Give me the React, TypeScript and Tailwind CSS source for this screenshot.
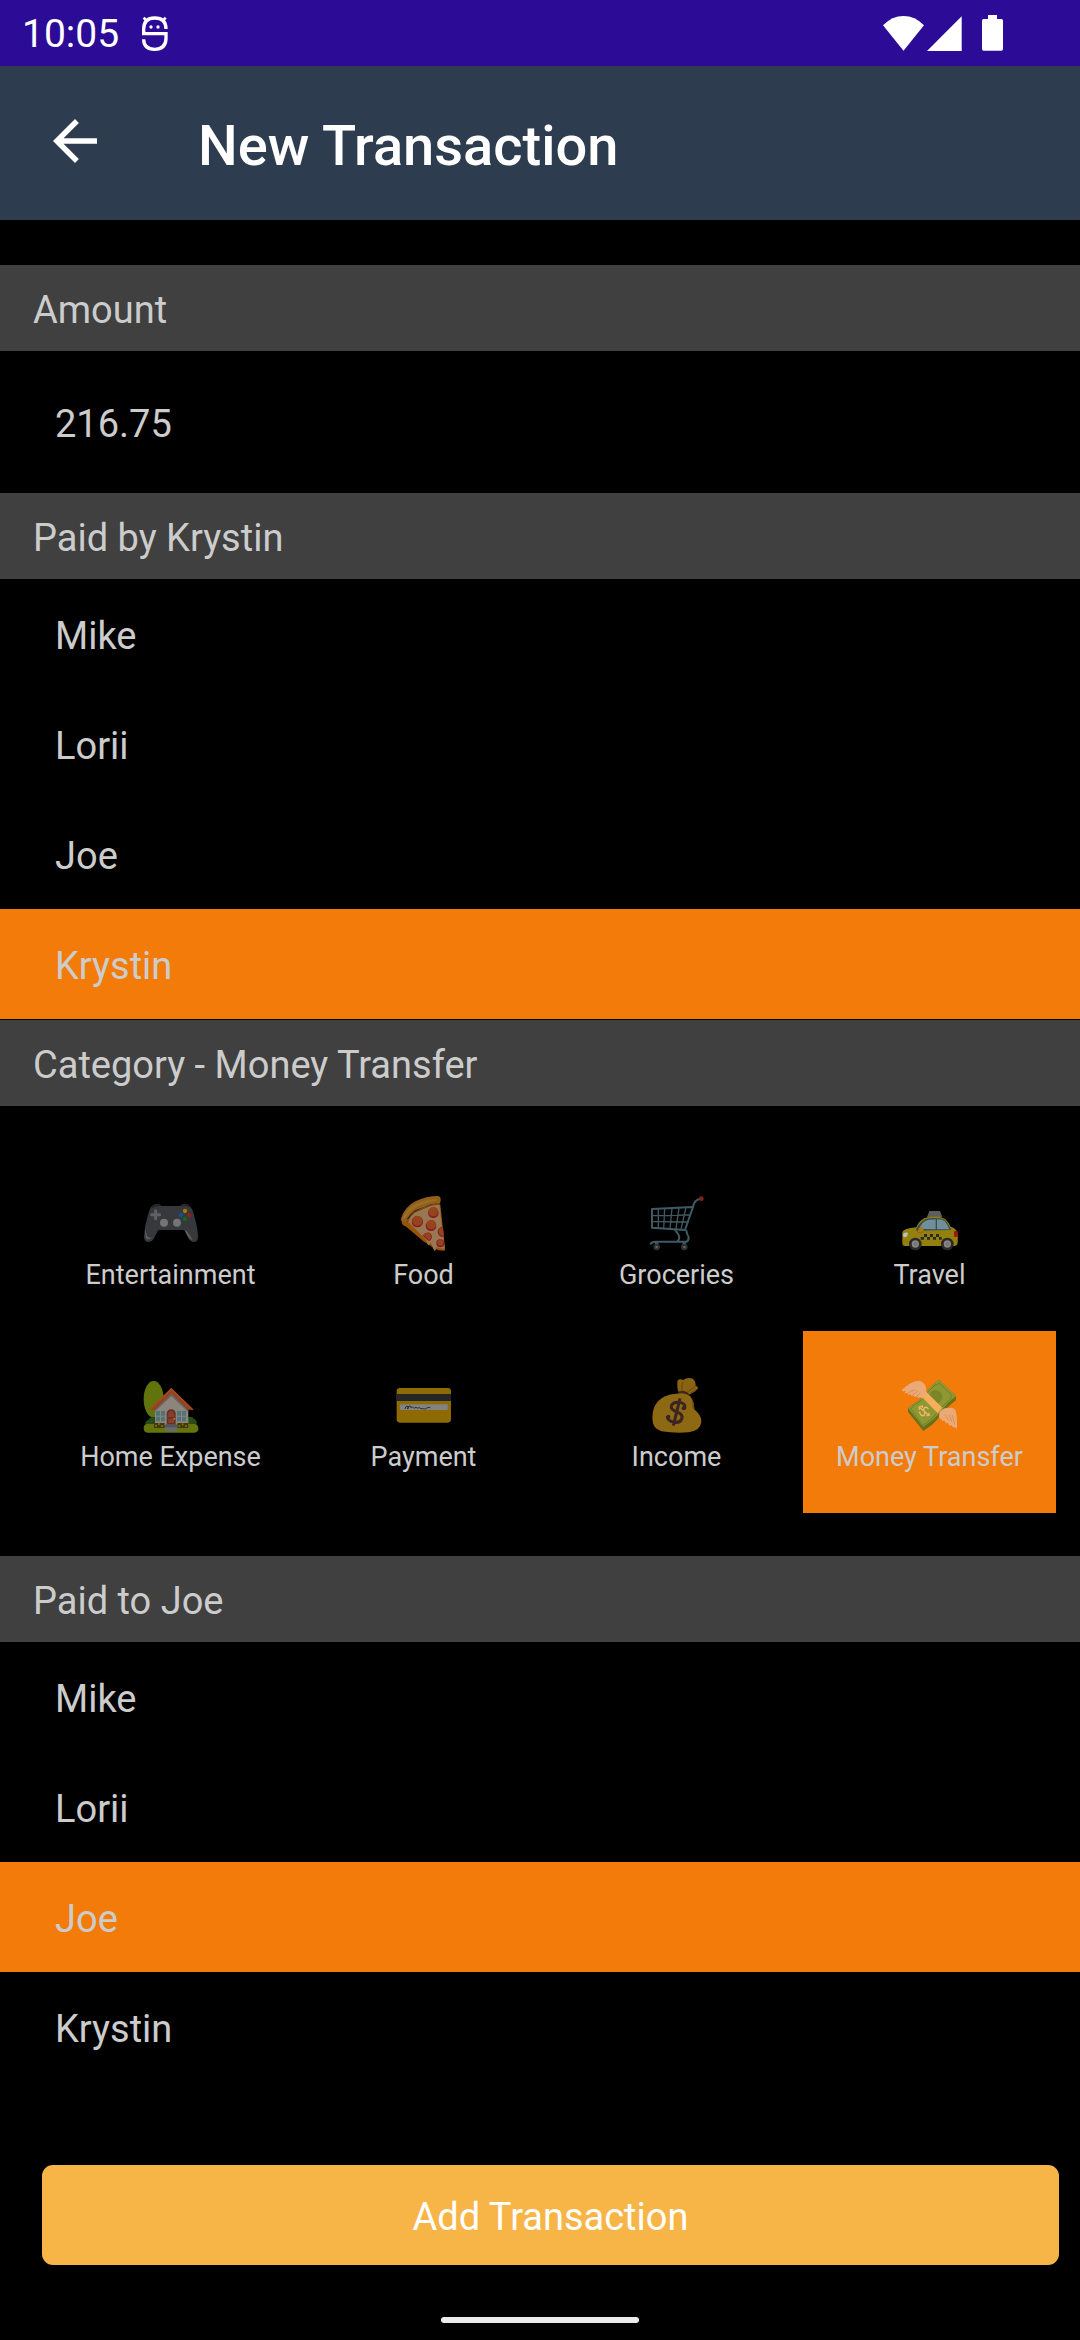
import { useState } from "react";
import type { ReactNode } from "react";

function Emoji({ viewBox, children }: { viewBox: string; children: ReactNode }) {
  return (
    <svg viewBox={viewBox} className="size-[57px] overflow-visible" aria-hidden="true">
      {children}
    </svg>
  );
}

const Gamepad = () => (
  <Emoji viewBox="246 75 171 171">
    <path d="M276 108q5-6 14-6 11 0 13 6h58q3-6 14-6 10 0 14 7 8 5 13 26 12 44 12 65 0 16-13 16-9 0-16-12l-11-22q-2-3-8-2h-66q-5 0-7 3l-12 24q-6 10-17 9-12-1-12-15 2-36 12-66 6-22 12-27z" fill="#37383c" />
    <path d="M276 109q5-6 14-6 11 0 13 5-16-1-27 6zM361 108q3-5 14-5 10 0 14 9-12-6-28-4z" fill="#222327" />
    <path d="M257 174q-3 22 2 32 8 6 18-4-12 4-16-5-4-10-4-23zM374 181q6 0 12 10l12 19q-10-2-15-12z" fill="#606164" />
    <path d="M287 122v24M275 134h24" stroke="#606164" strokeWidth="9" strokeLinecap="round" />
    <circle cx="312" cy="158" r="12" fill="#757575" />
    <circle cx="351" cy="158" r="12" fill="#757575" />
    <circle cx="375" cy="123" r="6.500" fill="#a97704" />
    <circle cx="363" cy="135" r="6.500" fill="#10509a" />
    <circle cx="387" cy="136" r="6.500" fill="#a01b18" />
    <circle cx="375" cy="147" r="6.500" fill="#0b6b29" />
  </Emoji>
);

const Pizza = () => (
  <Emoji viewBox="165 75 171 171">
    <path d="M185 155q0 10 12 14l53 45 14 8 20 14q14 7 29 6 3-1 2-9l-14-130z" fill="#9a5206" />
    <path d="M202 153q12-24 44-39 28-12 52-13 6 62 16 132-2 4-7 3l-17-4q-4 14-8 9-5-10-8-22-4-2-6 6-5 4-9-15z" fill="#987853" />
    <path d="M183 146q10-35 43-52 34-16 68-16 9 1 8 14-1 9-5 10-22-3-42 8-15 6-27 10-19 12-30 33-7 6-12 2-4-4-3-9z" fill="#8f5f1b" />
    <path d="M186 146q12-28 40-43 32-18 70-14-30 8-54 17-30 12-47 39z" fill="#9d6c24" />
    <path d="M202 156q10-24 28-33 12-4 27-11 20-11 40-9" fill="none" stroke="#7b4512" strokeWidth="4" />
    <g fill="#871d24">
      <circle cx="232" cy="155" r="17" />
      <circle cx="280" cy="128" r="16" />
      <circle cx="273" cy="167" r="16" />
      <path d="M309 170q-16 2-16 16 1 15 19 15z" />
      <path d="M248 197q8-12 20-9 10 6 7 17-3 9-9 8z" />
      <circle cx="301" cy="220" r="12" />
    </g>
    <g fill="#96441c">
      <circle cx="232" cy="152" r="15" />
      <circle cx="280" cy="125" r="14" />
      <circle cx="274" cy="164" r="14" />
      <path d="M309 172q-13 2-13 13 1 11 15 12z" />
      <path d="M251 196q8-9 17-6 7 5 5 14-3 6-7 5z" />
      <circle cx="301" cy="218" r="9" />
    </g>
  </Emoji>
);

const Cart = () => (
  <Emoji viewBox="174 75 171 171">
    <g fill="none" stroke="#3f5a64" strokeLinecap="round" strokeLinejoin="round">
      <path d="M186 117l123-6-24 69-99-7z" strokeWidth="6" />
      <path d="M187 137l114-2M187 155l107 1M205 117v57M224 116l-3 59M246 115l-6 61M267 114l-9 63M288 112l-15 66" strokeWidth="4" />
      <path d="M309 111q3-22 23-25" strokeWidth="6" />
      <path d="M182 221q4-6 15-6h92q8-2 7-14-6-9-7-19M256 181q11 12 12 22-1 8-6 11" strokeWidth="6" />
    </g>
    <path d="M195 217h10v10h-10zM278 217h10v10h-10z" fill="#42606c" />
    <circle cx="334" cy="86" r="7" fill="#7d261b" />
    <circle cx="200" cy="231" r="10" fill="#303030" />
    <circle cx="283" cy="231" r="10" fill="#303030" />
    <circle cx="200" cy="231" r="4" fill="#606060" />
    <circle cx="283" cy="231" r="4" fill="#606060" />
  </Emoji>
);

const Taxi = () => (
  <Emoji viewBox="153 75 171 171">
    <path d="M238 123h32l7 19h-46z" fill="#5e5e5e" />
    <path d="M157 186q3-10 42-14 8-20 24-27 15-6 44-5 22 2 35 30 14 4 20 16 3 24 0 37-2 4-7 5H162q-5-1-5-8z" fill="#94800f" />
    <path d="M199 177q14-29 38-32 26-3 43 3 12 6 24 32l-105 2z" fill="#3b4a4b" />
    <path d="M206 177q12-25 30-28l21-1v30zM261 148q17 0 23 6 8 8 14 24h-37z" fill="#6f8f9b" />
    <path d="M160 190q8-4 14-2-1 13-9 14-5 0-6-5z" fill="#bdbdbd" />
    <rect x="312" y="183" width="11" height="18" rx="3" fill="#a01512" />
    <path d="M204 184q1-12 9-13 7 0 8 10-2 8-11 7z" fill="#a97b0c" />
    <path d="M201 185l10 4 8-4" fill="none" stroke="#a8540a" strokeWidth="3" />
    <path d="M222 192h9v9h9v-9h9v9h9v-9h9v9h8v8h-8v-8h-9v8h-9v-8h-9v8h-9v-8h-9v8h-10v-8h10z" fill="#2b2b24" />
    <circle cx="196" cy="222" r="19" fill="#2d2826" />
    <circle cx="292" cy="222" r="19" fill="#2d2826" />
    <circle cx="196" cy="222" r="11" fill="#858585" />
    <circle cx="292" cy="222" r="11" fill="#858585" />
    <circle cx="196" cy="222" r="5" fill="#727272" />
    <circle cx="292" cy="222" r="5" fill="#727272" />
  </Emoji>
);

const House = () => (
  <Emoji viewBox="246 81 171 171">
    <path d="M276 195h9v28h-9z" fill="#3d2a26" />
    <ellipse cx="281" cy="148" rx="30" ry="55" fill="#61730b" />
    <path d="M256 224q-1-12 10-15 7-12 20-7h98q13-6 18 5 10 3 8 17z" fill="#2a4b16" />
    <path d="M251 234q0-11 12-12h141q11 2 11 13 0 13-12 13H263q-12 0-12-14z" fill="#65740c" />
    <path d="M334 126l51 51v50H285v-50z" fill="#8b857c" />
    <path d="M334 130l-50 47v8l50-47 50 47v-8z" fill="#68625c" />
    <path d="M334 114l67 65h-17l-50-49-50 49h-17z" fill="#95401f" />
    <path d="M334 114l67 65h-6l-61-58-61 58h-6z" fill="#a64b25" />
    <path d="M288 183h12v14h-12zM303 183h12v14h-12zM288 200h12v14h-12zM303 200h12v14h-12zM351 183h12v14h-12zM366 183h12v14h-12zM351 200h12v14h-12zM366 200h12v14h-12z" fill="#51747b" />
    <path d="M320 224v-34q2-12 13-12 12 0 14 12v34z" fill="#6d2e22" />
    <path d="M325 201v-10q2-8 8-8 7 0 9 8v10zM325 206h17v13h-17z" fill="#84402f" />
    <circle cx="343" cy="206" r="3" fill="#b38007" />
    <path d="M282 219h32v15h-32zM352 219h33v15h-33z" fill="#3f3b0d" />
    <g fill="#8d720b">
      <circle cx="288" cy="227" r="3" />
      <circle cx="297" cy="222" r="3" />
      <circle cx="306" cy="228" r="3" />
      <circle cx="358" cy="228" r="3" />
      <circle cx="368" cy="223" r="3" />
      <circle cx="378" cy="228" r="3" />
    </g>
    <path d="M316 223h35v10h-35z" fill="#545558" />
    <path d="M314 232h39v12h-39z" fill="#696a6d" />
  </Emoji>
);

const Card = () => (
  <Emoji viewBox="165 81 171 171">
    <rect x="170" y="114" width="163" height="104" rx="10" fill="#8e6a04" />
    <path d="M170 132h163v21H170z" fill="#242526" />
    <path d="M180 163h143v17H180z" fill="#828282" />
    <path d="M195 177q2-9 7-9 4 2 1 9 2-12 8-9-2 4 2 4 5-2 7 1t8-1q4 4 10 1 4 4 9 3l9 1q4-5 15-5" fill="none" stroke="#1f1f1f" strokeWidth="2.500" />
  </Emoji>
);

const MoneyBag = () => (
  <Emoji viewBox="174 81 171 171">
    <path d="M264 124q-4-22-1-33 6-6 17-1 11-9 25-5 12 4 12 22 8 2 7 8-4 8-17 14-9 7-12 5z" fill="#896312" />
    <path d="M276 122q-2-16 3-26M292 126q8-6 25-18M300 130q15-6 24-15" fill="none" stroke="#6b4707" strokeWidth="3" />
    <path d="M262 132q4-10 16-10 15 1 20 12l-4 6-32-4z" fill="#3b2720" />
    <path d="M262 131q22-5 38 7 12 14 13 40 24 22 21 38-3 27-39 31-41 3-81-3-27-8-27-39 0-48 38-66 18-9 37-8z" fill="#8d6913" />
    <path d="M300 138q13 16 13 40l-6-4q2-20-7-36z" fill="#70500a" />
    <path d="M284 177q5-15-13-20-21-3-27 10-3 12 17 19 17 6 15 18-4 15-23 13-21-4-21-19M270 145l-20 82" fill="none" stroke="#3b2422" strokeWidth="9" />
    <circle cx="281" cy="175" r="6" fill="#3b2422" />
    <circle cx="235" cy="200" r="6" fill="#3b2422" />
  </Emoji>
);

const FlyingMoney = () => (
  <Emoji viewBox="333 171 171 171">
    <path d="M354 264q16-12 37-26 26-36 56-59l51 49v13q-28 21-45 44-20 28-53 48l-46-57z" fill="#69701a" />
    <path d="M354 264q16-12 37-26 26-36 56-59l51 49q-26 20-44 43-22 31-55 49z" fill="#8e9833" />
    <path d="M362 265q7-1 7-8 16-8 28-20 22-28 38-42 9 1 12-6l39 37q-6 5-3 10-22 17-39 39-17 23-37 36-8-1-9 6z" fill="none" stroke="#6c7b25" strokeWidth="2.500" />
    <ellipse cx="437" cy="230" rx="20" ry="20" fill="#7c8628" />
    <path d="M393 228q7-10 14-14l50 49q-7 9-14 17z" fill="#f7ad5a" />
    <path d="M336 209q28-27 53-27 20 6 20 33 2 6-4 9l-8 12-6-4-5 2-4-4-7 2-4-5-6 1-4-5-8 2 1-6-11 1 5-7-11 1z" fill="#eba976" />
    <path d="M355 219q13-9 20-9M366 226l17-13M377 231l14-12" fill="none" stroke="#d88a52" strokeWidth="2.500" />
    <path d="M448 278q8-15 26-14 16-3 22 6 6 16 5 57l-9-7-3 2-6-7-5 2-4-8-6 1-3-7-8-1q-2-5-10-9z" fill="#eba976" />
    <path d="M464 283l13 19M477 284l9 22M487 285l7 28" fill="none" stroke="#d88a52" strokeWidth="2.500" />
    <path d="M415 267q-5-8-12-4-4 4 0 12 4 8-2 12-8 2-11-7M388 262l28 23M397 256v8M391 275l-4 4M417 278v8l-8 1M388 270v-9l8-3" fill="none" stroke="#f3b565" strokeWidth="4" />
  </Emoji>
);

const people = ["Mike", "Lorii", "Joe", "Krystin"];

const categories = [
  { name: "Entertainment", Icon: Gamepad },
  { name: "Food", Icon: Pizza },
  { name: "Groceries", Icon: Cart },
  { name: "Travel", Icon: Taxi },
  { name: "Home Expense", Icon: House },
  { name: "Payment", Icon: Card },
  { name: "Income", Icon: MoneyBag },
  { name: "Money Transfer", Icon: FlyingMoney },
];

function StatusBar() {
  return (
    <div className="flex h-[66px] items-center bg-[#2c0b96] pr-[77px] pl-[22px] text-white">
      <span className="pt-0.5 text-[39px] leading-[46px]">10:05</span>
      <svg viewBox="428 47 78 105" className="ml-[23px] h-[35px] w-[26px]" fill="none" stroke="#fff" strokeWidth="10" aria-hidden="true">
        <path d="M500 86q0-33-34-33-33 0-33 34v13h67v15q-1 32-34 32-33 0-33-30" />
        <path d="M433 52l9 10M499 52l-9 10" strokeWidth="8" />
        <circle cx="455" cy="80" r="5" fill="#fff" stroke="none" />
        <circle cx="476" cy="80" r="5" fill="#fff" stroke="none" />
      </svg>
      <div className="ml-auto flex items-center" aria-hidden="true">
        <svg viewBox="129 45 123 105" className="h-[35px] w-[41px]">
          <path d="M129 73q27-28 61.500-28T252 73l-61.500 76z" fill="#fff" />
        </svg>
        <svg viewBox="262 45 105 105" className="ml-[3px] size-[35px]">
          <path d="M366 46v104H262z" fill="#fff" />
        </svg>
        <svg viewBox="426 45 63 108" className="ml-[20px] h-[36px] w-[21px]">
          <path d="M444 45h27v12h13q5 0 5 5v85q0 5-5 5h-53q-5 0-5-5V62q0-5 5-5h13z" fill="#fff" />
        </svg>
      </div>
    </div>
  );
}

function SectionTitle({ children }: { children: ReactNode }) {
  return (
    <h2 className="bg-[#404040] px-[33px] pt-[22px] pb-[18px] text-[38px] leading-[46px] font-normal">
      {children}
    </h2>
  );
}

function PeopleList({ label, value, onChange }: { label: string; value: string; onChange: (name: string) => void }) {
  return (
    <div role="group" aria-label={label} className="flex flex-col">
      {people.map((name) => (
        <button
          key={name}
          type="button"
          aria-pressed={name === value}
          onClick={() => onChange(name)}
          className={
            name === value
              ? "bg-[#f37b0a] px-[55px] pt-[34px] pb-[30px] text-left text-[38px] leading-[46px]"
              : "px-[55px] pt-[34px] pb-[30px] text-left text-[38px] leading-[46px]"
          }
        >
          {name}
        </button>
      ))}
    </div>
  );
}

export default function App() {
  const [amount, setAmount] = useState("216.75");
  const [paidBy, setPaidBy] = useState("Krystin");
  const [paidTo, setPaidTo] = useState("Joe");
  const [category, setCategory] = useState("Money Transfer");

  return (
    <div className="flex min-h-screen flex-col bg-black font-['Roboto',sans-serif] text-[#cccccc]">
      <StatusBar />
      <header className="flex h-[154px] items-center gap-[101px] bg-[#2d3d4f] pl-[53px] text-white">
        <button type="button" aria-label="Back" className="pb-1">
          <svg viewBox="4 4 16 16" className="size-[44px]" fill="currentColor" aria-hidden="true">
            <path d="M20 11H7.830l5.590-5.590L12 4l-8 8 8 8 1.410-1.410L7.830 13H20v-2z" />
          </svg>
        </button>
        <h1 className="pt-1.5 text-[56px] leading-[64px] font-medium">New Transaction</h1>
      </header>

      <main className="flex grow flex-col pt-[45px]">
        <SectionTitle>
          <label htmlFor="amount">Amount</label>
        </SectionTitle>
        <input
          id="amount"
          inputMode="decimal"
          value={amount}
          onChange={(e) => setAmount(e.target.value)}
          className="w-full bg-transparent px-[55px] pt-[50px] pb-[46px] text-[38px] leading-[46px] outline-none"
        />

        <SectionTitle>Paid by {paidBy}</SectionTitle>
        <PeopleList label="Paid by" value={paidBy} onChange={setPaidBy} />

        <div className="pt-px">
          <SectionTitle>Category - {category}</SectionTitle>
        </div>
        <div role="group" aria-label="Category" className="grid grid-cols-4 py-[43px] pr-6 pl-11">
          {categories.map(({ name, Icon }) => (
            <button
              key={name}
              type="button"
              aria-pressed={name === category}
              onClick={() => setCategory(name)}
              className={
                name === category
                  ? "flex flex-col items-center gap-[7px] bg-[#f37b0a] pt-[46px] pb-10 text-[27px] leading-8"
                  : "flex flex-col items-center gap-[7px] pt-[46px] pb-10 text-[27px] leading-8"
              }
            >
              <Icon />
              <span>{name}</span>
            </button>
          ))}
        </div>

        <SectionTitle>Paid to {paidTo}</SectionTitle>
        <PeopleList label="Paid to" value={paidTo} onChange={setPaidTo} />

        <div className="mt-auto pr-[21px] pl-[42px]">
          <button
            type="button"
            className="h-[100px] w-full rounded-[11px] bg-[#f7b548] pt-1 text-[38px] leading-[46px] text-white"
          >
            Add Transaction
          </button>
        </div>
        <div className="mx-auto mt-[52px] mb-[17px] h-1.5 w-[198px] rounded-full bg-[#ebebeb]" />
      </main>
    </div>
  );
}
